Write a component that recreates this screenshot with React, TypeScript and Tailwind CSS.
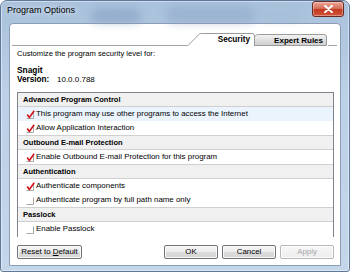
import React from "react";

function Check({ checked }: { checked: boolean }) {
  return (
    <svg width="9" height="9" viewBox="0 0 9 9" className="shrink-0">
      <path d="M0.5 8.5 H7.5 V1.5" fill="none" stroke="#a8a8a8" strokeWidth="1" />
      {checked && (
        <path d="M1.2 4.6 L3.3 7.4 L8.2 0.8" fill="none" stroke="#d4141c" strokeWidth="1.6" strokeLinejoin="round" />
      )}
    </svg>
  );
}

function Header({ label, first }: { label: string; first?: boolean }) {
  return (
    <div
      className={
        first
          ? "h-[14px] bg-[#f0f0f0] border-b border-[#d0d0d0] flex items-center pl-[5px] font-bold text-[7.5px] text-black"
          : "h-[15px] bg-[#f0f0f0] border-y border-[#d0d0d0] flex items-center pl-[5px] font-bold text-[7.5px] text-black"
      }
    >
      {label}
    </div>
  );
}

function Row({ label, checked, hl }: { label: string; checked: boolean; hl?: boolean }) {
  return (
    <div
      className={
        hl
          ? "h-[14px] bg-[#ebf4fd] flex items-center pl-[8px] gap-[1px] text-[7.9px] text-black"
          : "h-[14px] bg-white flex items-center pl-[8px] gap-[1px] text-[7.9px] text-black"
      }
    >
      <Check checked={checked} />
      <span>{label}</span>
    </div>
  );
}

function Btn({ children, disabled, w }: { children: React.ReactNode; disabled?: boolean; w: string }) {
  return (
    <div
      className={
        (disabled
          ? "border-[#b5b9bd] text-[#a6a6a6] bg-[linear-gradient(180deg,#f7f7f7,#ededed)] "
          : "border-[#6f7378] text-black bg-[linear-gradient(180deg,#f4f4f4_0%,#ebebeb_50%,#dcdcdc_51%,#d4d4d4_100%)] ") +
        "h-[14px] border rounded-[2px] flex items-center justify-center text-[7.9px] shadow-[inset_0_0_0_1px_rgba(255,255,255,0.8)] " +
        w
      }
    >
      {children}
    </div>
  );
}

export default function App() {
  return (
    <div className="w-[350px] h-[276px] bg-white font-['Liberation_Sans',Arial,sans-serif]">
      <div className="relative w-[350px] h-[272px] rounded-t-[7px] rounded-b-[3px] border border-[#5f7899] bg-[linear-gradient(180deg,#a9c1dc_0%,#bcd0e7_35%,#c4d6ea_100%)] flex flex-col overflow-hidden shadow-[inset_0_0_0_1px_rgba(255,255,255,0.45)]">
        {/* title bar */}
        <div className="relative h-[22px] flex items-start justify-between pl-[6px] pr-[5px] shrink-0">
          <div className="absolute left-[90px] top-[8px] w-[50px] h-[14px] rounded-full bg-[#7e98b9] opacity-50 blur-[4px]" />
          <div className="absolute left-[165px] top-[6px] w-[90px] h-[16px] rounded-full bg-[#8aa3c2] opacity-50 blur-[5px]" />
          <div className="absolute left-[260px] top-[10px] w-[40px] h-[10px] rounded-full bg-[#9fb5d0] opacity-40 blur-[4px]" />
          <span className="relative mt-[3px] text-[9px] leading-[12px] text-black [text-shadow:0_0_5px_rgba(255,255,255,0.9)]">
            Program Options
          </span>
          <div className="relative mt-[0px] w-[32px] h-[16px] rounded-[3px] border border-[#6a2b22] bg-[linear-gradient(180deg,#e9a696_0%,#d8705d_45%,#c2381f_55%,#d3563b_100%)] shadow-[inset_0_0_0_1px_rgba(255,255,255,0.35)] flex items-center justify-center">
            <svg width="9" height="8" viewBox="0 0 9 8">
              <path d="M1 0.8 L8 7.2 M8 0.8 L1 7.2" stroke="#ffffff" strokeWidth="2" strokeLinecap="round" />
            </svg>
          </div>
        </div>
        {/* body */}
        <div className="flex-1 flex px-[8px] pb-[5px]">
          <div className="flex-1 flex flex-col bg-white border border-[#8c9cb3] rounded-t-[4px]">
            {/* tab strip */}
            <div className="mt-[9px] ml-[2px] mr-[3px] h-[13px] flex items-end">
              <div className="flex-1 h-[13px] border-b border-[#a3a3a3]" />
              <div className="relative z-10 w-[68px] h-[13px] flex items-center justify-end pr-[6px]">
                <svg className="absolute inset-0" width="68" height="13" viewBox="0 0 68 13">
                  <path
                    d="M0 12.5 L10.5 1.8 Q11.5 0.5 13.5 0.5 L64 0.5 Q66.5 0.5 66.5 3 L66.5 13"
                    fill="#ffffff"
                    stroke="#9b9b9b"
                    strokeWidth="1"
                  />
                </svg>
                <span className="relative font-bold text-[8.2px] leading-[10px] mt-[1px] text-black">Security</span>
              </div>
              <div className="relative -ml-[10px] w-[82px] h-[13px] flex items-center justify-end pr-[5px]">
                <svg className="absolute inset-0" width="82" height="13" viewBox="0 0 82 13">
                  <defs>
                    <linearGradient id="tg" x1="0" y1="0" x2="0" y2="1">
                      <stop offset="0" stopColor="#f4f4f4" />
                      <stop offset="1" stopColor="#cdcdcd" />
                    </linearGradient>
                  </defs>
                  <path
                    d="M0 12.5 L9.5 2.6 Q10.5 1.5 12.5 1.5 L78 1.5 Q80.5 1.5 80.5 4 L80.5 12.5 Z"
                    fill="url(#tg)"
                    stroke="#9b9b9b"
                    strokeWidth="1"
                  />
                </svg>
                <span className="relative font-bold text-[8px] leading-[10px] mt-[2px] text-black">Expert Rules</span>
              </div>
              <div className="w-[9px] h-[13px] border-b border-[#a3a3a3]" />
            </div>
            {/* content */}
            <div className="flex-1 flex flex-col pl-[7px] pr-[6px]">
              <div className="mt-[3px] h-[10px] leading-[10px] text-[7.6px] text-black">
                Customize the program security level for:
              </div>
              <div className="mt-[6px] h-[10px] leading-[10px] text-[8.4px] font-bold text-black">Snagit</div>
              <div className="h-[10px] leading-[10px] flex text-black">
                <span className="w-[40px] font-bold text-[8.2px]">Version:</span>
                <span className="text-[8px]">10.0.0.788</span>
              </div>
              <div className="mt-[7px] h-[145px] border-x border-t border-[#7f848c] flex flex-col overflow-hidden">
                <Header label="Advanced Program Control" first />
                <Row label="This program may use other programs to access the Internet" checked hl />
                <Row label="Allow Application Interaction" checked />
                <Header label="Outbound E-mail Protection" />
                <Row label="Enable Outbound E-mail Protection for this program" checked />
                <Header label="Authentication" />
                <Row label="Authenticate components" checked />
                <Row label="Authenticate program by full path name only" checked={false} />
                <Header label="Passlock" />
                <Row label="Enable Passlock" checked={false} />
              </div>
              <div className="mt-[8px] flex items-center">
                <Btn w="w-[65px]">
                  <span>
                    Reset to <span className="underline">D</span>efault
                  </span>
                </Btn>
                <div className="flex-1" />
                <div className="flex gap-[4px]">
                  <Btn w="w-[54px]">OK</Btn>
                  <Btn w="w-[54px]">Cancel</Btn>
                  <Btn w="w-[54px]" disabled>
                    Apply
                  </Btn>
                </div>
              </div>
            </div>
          </div>
        </div>
      </div>
    </div>
  );
}
